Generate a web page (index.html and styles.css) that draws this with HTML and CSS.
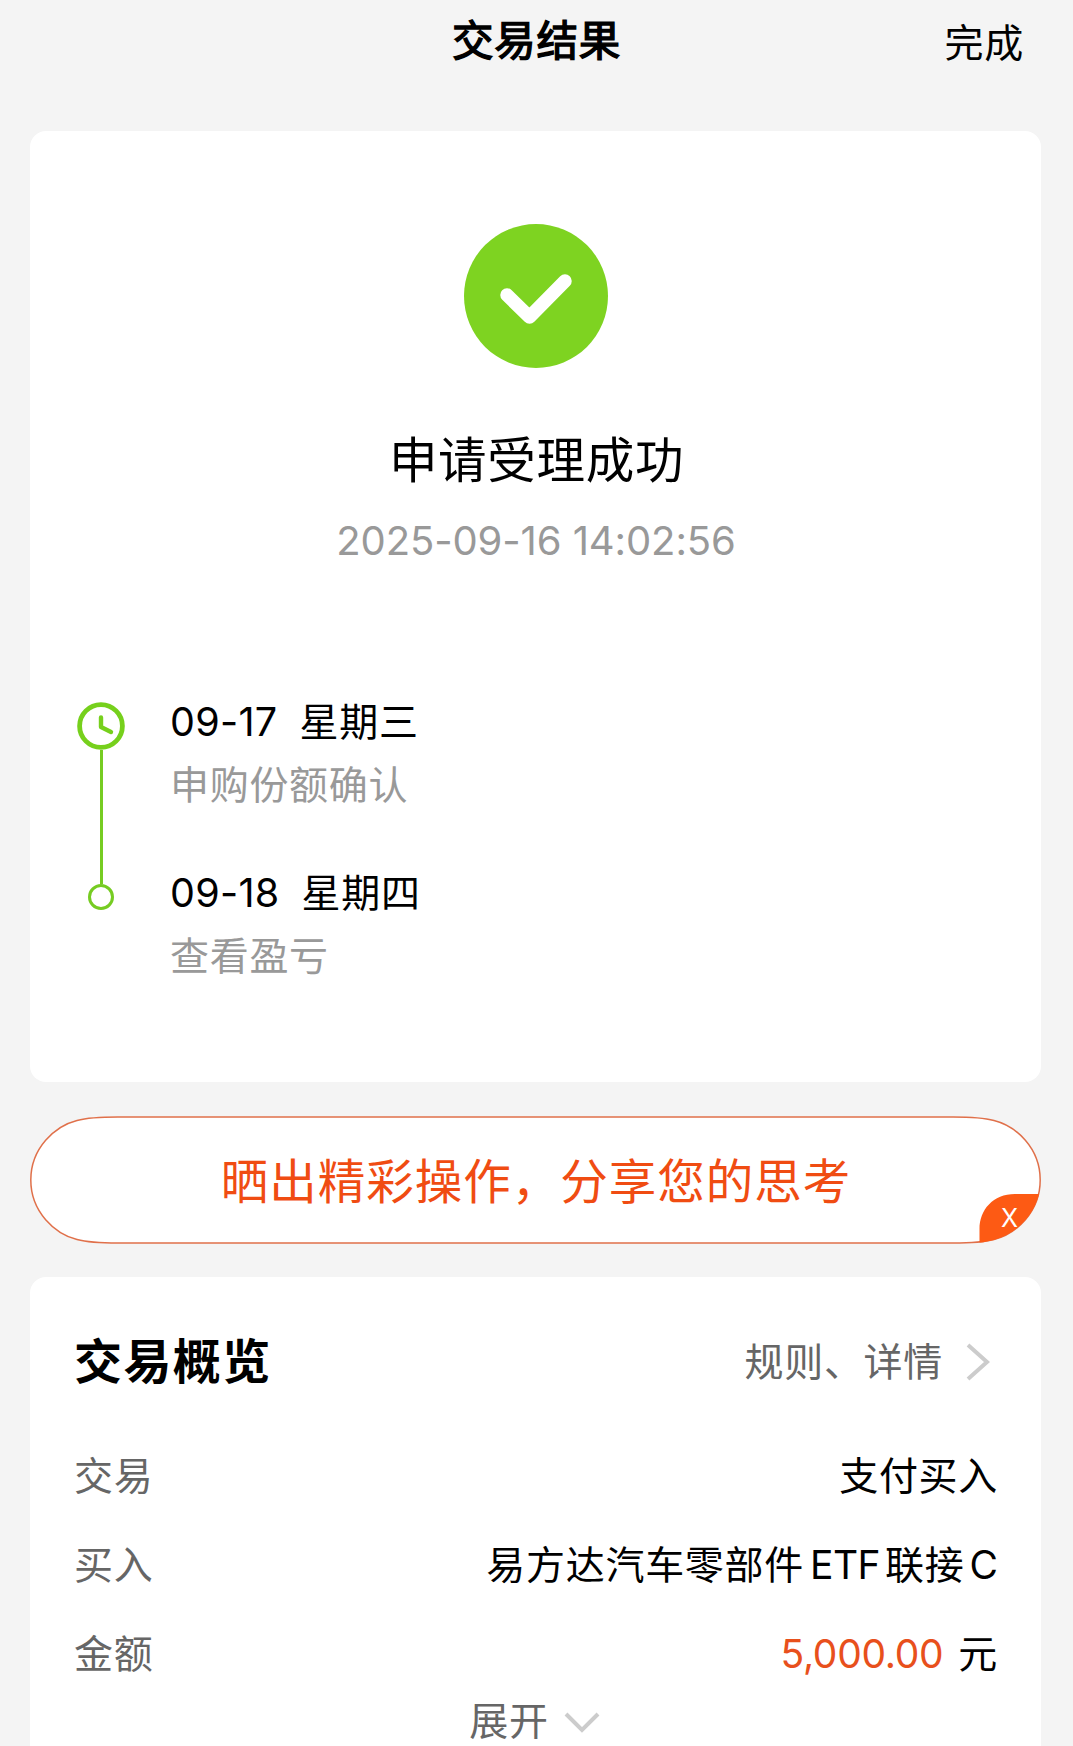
FILE: index.html
```html
<!DOCTYPE html>
<html lang="zh-CN">
<head>
  <meta charset="UTF-8">
  <meta name="viewport" content="width=device-width, initial-scale=1.0">
  <title>交易结果</title>
  <link rel="stylesheet" href="styles.css">
</head>
<body>
  <header class="navbar">
    <h1 class="navbar-title">交易结果</h1>
    <a class="navbar-done">完成</a>
  </header>

  <main class="page">
    <section class="card result">
      <svg class="result-icon" viewBox="0 0 144 144">
        <circle cx="72" cy="72" r="72" fill="#7ed321"/>
        <path d="M43 71 L65.5 93 L101 57" fill="none" stroke="#fff" stroke-width="13.5" stroke-linecap="round" stroke-linejoin="round"/>
      </svg>
      <h2 class="result-title">申请受理成功</h2>
      <p class="result-time">2025-09-16 14:02:56</p>

      <div class="timeline">
        <div class="timeline-track">
          <svg class="clock" viewBox="0 0 48 48">
            <circle cx="24" cy="24" r="21.4" fill="none" stroke="#76d01c" stroke-width="4.8"/>
            <path d="M24 15.5 V25 L34 30" fill="none" stroke="#76d01c" stroke-width="4.4" stroke-linecap="round" stroke-linejoin="round"/>
          </svg>
          <div class="line"></div>
          <div class="dot"></div>
        </div>
        <div class="timeline-steps">
          <div class="step">
            <div class="step-date"><span class="num">09-17</span><span>星期三</span></div>
            <div class="step-text">申购份额确认</div>
          </div>
          <div class="step">
            <div class="step-date"><span class="num">09-18</span><span>星期四</span></div>
            <div class="step-text">查看盈亏</div>
          </div>
        </div>
      </div>
    </section>

    <section class="share">
      <svg class="share-shape" viewBox="0 0 1011 128">
        <path d="M88 1 H923 C945 1 954 1.8 964 4.5 C986 10 1010.2 32 1010.2 64 C1010.2 96 986 118 964 123.5 C954 126.2 945 127 923 127 H88 C66 127 57 126.2 47 123.5 C25 118 .8 96 .8 64 C.8 32 25 10 47 4.5 C57 1.8 66 1 88 1 Z" fill="#fff" stroke="#e0704a" stroke-width="1.5"/>
        <path d="M949.5 126.6 V113 C949.5 94 963 78 985 78 H1009 C1004 100 985 118.5 964 124 C959 125.2 955 126.2 949.5 126.6 Z" fill="#fd5a14"/>
      </svg>
      <span class="share-text">晒出精彩操作，分享您的思考</span>
      <span class="share-close">X</span>
    </section>

    <section class="card overview">
      <div class="overview-head">
        <h2 class="overview-title">交易概览</h2>
        <a class="overview-link">规则、详情
          <svg class="chevron-right" viewBox="0 0 24 40"><path d="M2 3 L21 20 L2 37" fill="none" stroke="#ccc" stroke-width="4"/></svg>
        </a>
      </div>
      <div class="row"><span class="label">交易</span><span>支付买入</span></div>
      <div class="row"><span class="label">买入</span><span>易方达汽车零部件<span class="latin">ETF</span>联接<span class="latin-end">C</span></span></div>
      <div class="row"><span class="label">金额</span><span><span class="amount">5,000.00</span>元</span></div>
      <div class="expand">
        <span>展开</span>
        <svg class="chevron-down" viewBox="0 0 36 22"><path d="M2 2 L18 18 L34 2" fill="none" stroke="#ccc" stroke-width="4"/></svg>
      </div>
    </section>
  </main>
</body>
</html>
```
FILE: styles.css
```css
* {
  box-sizing: border-box;
}
body {
  margin: 0;
  height: 1746px;
  overflow: hidden;
  background: #f4f4f4;
  color: #000;
  font-family: Inter, "Noto Sans CJK SC", sans-serif;
  font-size: 39px;
  line-height: 60px;
  letter-spacing: 0.7px;
  white-space: nowrap;
}
h1, h2, p {
  margin: 0;
}
.navbar {
  display: grid;
  grid-template-columns: 1fr auto 1fr;
  align-items: center;
  height: 131px;
  padding: 0 49px 45px;
}
.navbar-title {
  grid-column: 2;
  margin-top: -4px;
  font-size: 41.5px;
  font-weight: 400;
  -webkit-text-stroke: 1.4px #000;
}
.navbar-done {
  justify-self: end;
}
.page {
  padding: 0 32px 0 30px;
}
.card {
  background: #fff;
  border-radius: 16px;
}

/* result */
.result {
  display: flex;
  flex-direction: column;
  align-items: center;
  height: 951px;
  padding-top: 93px;
}
.result-icon {
  width: 144px;
  height: 144px;
}
.result-title {
  margin-top: 58px;
  padding-left: 2px;
  font-size: 48.5px;
  font-weight: 400;
  line-height: 70px;
}
.result-time {
  margin-top: 15px;
  padding-left: 1px;
  color: #999;
  font-size: 40px;
  letter-spacing: -0.1px;
}

/* timeline */
.timeline {
  display: flex;
  align-self: stretch;
  margin-top: 121px;
  padding-left: 47px;
}
.timeline-track {
  display: flex;
  flex-direction: column;
  align-items: center;
  width: 48px;
  padding-top: 10px;
}
.clock {
  width: 48px;
  height: 48px;
}
.line {
  width: 3px;
  height: 134px;
  background: #76cc22;
}
.dot {
  width: 26px;
  height: 26px;
  border: 3px solid #76cc22;
  border-radius: 50%;
}
.timeline-steps {
  padding-left: 45px;
}
.step {
  height: 170.5px;
}
.step-date {
  display: flex;
  gap: 22px;
}
.num {
  font-size: 39.5px;
  letter-spacing: 0.3px;
}
.step-text {
  margin-top: 3px;
  color: #999;
}

/* share banner */
.share {
  position: relative;
  display: flex;
  align-items: center;
  justify-content: center;
  height: 128px;
  margin: 34px 0 33px;
  color: #f04c12;
  font-size: 47.5px;
  letter-spacing: 1px;
}
.share-shape {
  position: absolute;
  inset: 0;
  width: 100%;
  height: 100%;
}
.share-text {
  position: relative;
  padding: 4px 0 0 1px;
}
.share-close {
  position: absolute;
  right: 23px;
  bottom: 11px;
  color: #fff;
  font-size: 25px;
  font-weight: 400;
  line-height: 30px;
  letter-spacing: 0;
}

/* overview */
.overview {
  height: 500px;
  padding: 50px 43px 0 44px;
}
.overview-head {
  display: flex;
  align-items: center;
  justify-content: space-between;
  height: 70px;
  margin-bottom: 34px;
}
.overview-title {
  font-size: 48px;
  font-weight: 700;
  letter-spacing: 1.4px;
}
.overview-link {
  display: flex;
  align-items: center;
  gap: 23px;
  padding-right: 8px;
  color: #666;
}
.chevron-right {
  width: 24px;
  height: 40px;
}
.row {
  display: flex;
  align-items: center;
  justify-content: space-between;
  height: 89px;
}
.label {
  color: #666;
}
.latin {
  margin: 0 5px 0 6px;
  letter-spacing: -0.5px;
}
.latin-end {
  margin-left: 5px;
  letter-spacing: 0;
}
.amount {
  margin-right: 15px;
  color: #e8501c;
  letter-spacing: -0.3px;
}
.expand {
  display: flex;
  align-items: center;
  justify-content: center;
  gap: 15px;
  height: 46px;
  padding-right: 3px;
  color: #666;
}
.chevron-down {
  width: 36px;
  height: 22px;
  margin-top: 4px;
}
```
